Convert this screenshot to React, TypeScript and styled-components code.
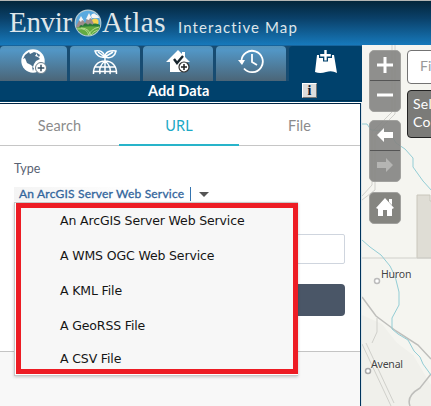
import React from "react";
import styled, { createGlobalStyle } from "styled-components";

const Global = createGlobalStyle`
  * { box-sizing: border-box; }
  body { margin: 0; overflow: hidden; font-family: Lato, "Open Sans", sans-serif; }
`;

const Page = styled.div`
  width: 431px;
  height: 406px;
  display: flex;
  flex-direction: column;
  overflow: hidden;
  background: #f5f5f0;
`;

const Header = styled.header`
  height: 45px;
  flex: none;
  display: flex;
  align-items: flex-start;
  padding-left: 9px;
  border-top: 1px solid #b4b6b4;
  background: linear-gradient(#03263b 0%, #0a416a 40%, #1779bb 100%);
  color: #dfe6ea;
`;

const Brand = styled.div`
  display: flex;
  width: 158px;
  height: 44px;
  font: 29px/43px "Liberation Serif", serif;
`;

const BrandWord = styled.span<{ $width: number; $spacing: number }>`
  width: ${(p) => p.$width}px;
  letter-spacing: ${(p) => p.$spacing}px;
  white-space: nowrap;
`;

const Emblem = styled.svg`
  width: 28px;
  height: 28px;
  margin-top: 8px;
  flex: none;
`;

const Subtitle = styled.span`
  margin: 15px 0 0 11px;
  font-size: 15px;
  line-height: 22px;
  letter-spacing: 1.1px;
  white-space: nowrap;
`;

const Body = styled.div`
  flex: 1;
  display: flex;
  min-height: 0;
`;

const Sidebar = styled.aside`
  width: 362px;
  flex: none;
  display: flex;
  flex-direction: column;
  background: #00416c;
`;

const ToolTabs = styled.nav`
  display: flex;
  height: 36px;
  flex: none;
  background: #174c72;
  border-top: 1px solid #17649c;
`;

const ToolTab = styled.div<{ $first?: boolean; $active?: boolean }>`
  width: ${(p) => (p.$first ? 67 : p.$active ? 74 : 70)}px;
  margin-right: ${(p) => (p.$active ? 0 : 3)}px;
  flex: none;
  display: flex;
  justify-content: center;
  border-radius: 4px 4px 0 0;
  background: ${(p) => (p.$active ? "#00416c" : "linear-gradient(#5693b8 0%, #5296c5 12%, #4b6577 100%)")};
  svg { display: block; margin-top: 3px; }
`;

const TitleBar = styled.div`
  height: 20px;
  flex: none;
  display: flex;
  align-items: center;
  color: #fff;
  padding-left: 148px;
  border-bottom: 1px solid #00304f;
`;

const TitleText = styled.h1`
  margin: 0;
  width: 154px;
  font-size: 14.5px;
  line-height: 20px;
  letter-spacing: 0.1px;
`;

const InfoButton = styled.span`
  width: 15px;
  height: 15px;
  background: #ddd;
  border: 1px solid #777;
  border-top-color: #fff;
  border-left-color: #fff;
  color: #102238;
  text-align: center;
  font: bold 14px/13px "Liberation Serif", serif;
`;

const Panel = styled.main`
  flex: 1;
  min-height: 0;
  margin-top: 1px;
  border-top: 1px solid #fff;
  border-right: 1px solid #dce4e8;
  background: #f8f8f8;
`;

const PanelInner = styled.div`
  height: 303px;
  border-top: 1px solid #002443;
  border-right: 1px solid #00345c;
`;

const Form = styled.section`
  position: relative;
  height: 248px;
  background: #fff;
  border-bottom: 1px solid #c4c4c4;
`;

const SourceTabs = styled.div`
  display: grid;
  grid-template-columns: 119px 120px 1fr;
  height: 42px;
`;

const SourceTab = styled.div<{ $active?: boolean }>`
  display: flex;
  justify-content: center;
  padding-top: 12px;
  font-size: 14.5px;
  line-height: 20px;
  letter-spacing: 0.1px;
  color: ${(p) => (p.$active ? "#1ca9c5" : "#8b8b8b")};
  border-bottom: ${(p) => (p.$active ? "2px solid #28b4ca" : "1px solid #c6c6c6")};
`;

const Label = styled.div`
  padding: 13px 0 0 14px;
  font-size: 12.5px;
  line-height: 20px;
  color: #596273;
`;

const Select = styled.div`
  display: flex;
  align-items: center;
  margin: 7px 0 0 14px;
  height: 16px;
`;

const SelectValue = styled.span`
  width: 177px;
  height: 14px;
  padding-left: 5px;
  border-right: 1px solid #3474b0;
  background: linear-gradient(90deg, #f4f4f4, #fff 70%);
  color: #32659c;
  font-size: 12px;
  -webkit-text-stroke: 0.3px #32659c;
  line-height: 14px;
  letter-spacing: 0.2px;
  white-space: nowrap;
`;

const Caret = styled.span`
  margin-left: 8px;
  border: 5px solid transparent;
  border-top-color: #555;
  border-bottom: 0;
`;

const UrlField = styled.div`
  margin: 32px 15px 0 14px;
  height: 30px;
  border: 1px solid #cfd5de;
  border-radius: 2px;
`;

const AddButton = styled.div`
  margin: 20px 15px 0 14px;
  height: 32px;
  border-radius: 4px;
  background: #4a5667;
`;

const Menu = styled.ul`
  position: absolute;
  left: 14px;
  top: 98px;
  width: 284px;
  height: 174px;
  margin: 0;
  padding: 0 0 0 1px;
  list-style: none;
  border: 1px solid #c8c8c8;
  border-right: 0;
  background: #fff;
  box-shadow: 0 1px 3px #0003;
`;

const Choices = styled.div`
  height: 171px;
  padding: 1px 0 0 39px;
  border: 5px solid #ed1c24;
  background: #f7f7f7;
`;

const Choice = styled.li<{ $last?: boolean }>`
  height: ${(p) => (p.$last ? 31 : 35)}px;
  padding-top: ${(p) => (p.$last ? 0 : 2)}px;
  color: #151515;
  font: 12.5px/20px "DejaVu Sans", sans-serif;
  letter-spacing: -0.14px;
  white-space: nowrap;
`;

const MapArea = styled.section`
  position: relative;
  flex: 1;
  overflow: hidden;
  background: #f5f5f0;
`;

const MapCanvas = styled.svg`
  display: block;
  width: 69px;
  height: 361px;
`;

const Place = styled.span<{ $x: number; $y: number }>`
  position: absolute;
  left: ${(p) => p.$x}px;
  top: ${(p) => p.$y}px;
  font: 10.5px/14px "Noto Sans", sans-serif;
  letter-spacing: -0.2px;
  color: #444;
  text-shadow: 0 0 2px #fff;
`;

const Controls = styled.div`
  position: absolute;
  left: 7px;
  top: 5px;
  width: 32px;
  display: flex;
  flex-direction: column;
`;

const ControlGroup = styled.div<{ $gap?: number; $home?: boolean }>`
  height: ${(p) => (p.$home ? 32 : 62)}px;
  margin-top: ${(p) => p.$gap ?? 0}px;
  border-radius: 5px;
  background: ${(p) => (p.$home ? "#858580" : "#858583e8")};
  border: 1px solid #a1a19e;
  display: flex;
  flex-direction: column;
`;

const Control = styled.div<{ $divided?: boolean }>`
  height: 30px;
  display: flex;
  align-items: center;
  justify-content: center;
  padding-bottom: 2px;
  border-bottom: ${(p) => (p.$divided ? "1px solid #555" : "0")};
`;

const SearchBox = styled.div`
  position: absolute;
  left: 45px;
  top: 5px;
  width: 60px;
  height: 34px;
  border: 1px solid #737373;
  border-radius: 4px;
  background: #fff;
  padding-left: 12px;
  color: #999;
  font: 14px/30px Lato, sans-serif;
`;

const LayerBox = styled.div`
  position: absolute;
  left: 45px;
  top: 45px;
  width: 60px;
  height: 48px;
  border: 1px solid #222;
  border-radius: 4px;
  background: #7b7b78;
  color: #fff;
  padding: 4px 0 0 5px;
  font: 14px/18px Lato, sans-serif;
  letter-spacing: 0.3px;
`;

const AtlasEmblem = () => (
  <Emblem viewBox="0 0 28 28">
    <defs>
      <clipPath id="disc"><circle cx="14" cy="14" r="12.3" /></clipPath>
    </defs>
    <circle cx="14" cy="14" r="13.4" fill="#b8cbd0" />
    <g clipPath="url(#disc)">
      <path fill="#59a9df" d="M0 0h28v28H0z" />
      <circle cx="21" cy="13" r="3.5" fill="#f6d54c" />
      <path fill="#9b8d8c" d="m1 19 6-11 4 6 4-9 7 14z" />
      <path fill="#f4f5f5" d="m5 11 2-4 3 5-2-1-1 2zm7-1 3-6 3 6-2-1-1 2zM17 7c1-3 4-3 5-1 3 0 4 2 3 3h-7z" />
      <path fill="#287b3b" d="M5 19c1-4 3-3 4-2 1-4 4-3 5-1 2-3 4-1 4 0 3-3 6-1 8 0v6H4z" />
      <path fill="#63aa42" d="M0 19q14-3 28-1v10H0z" />
      <path fill="none" stroke="#c7e8a0" strokeWidth=".8" d="M3 20q11-2 12 8M7 19q9 0 10 9M25 18q-9 2-11 10M26 21q-7 0-10 7" />
    </g>
  </Emblem>
);

const GlobeAdd = () => (
  <svg width="26" height="27" viewBox="0 0 26 27">
    <circle cx="12" cy="12" r="11.7" fill="#fff" />
    <path fill="#486f8c" d="m4 6 4-3 1 2 4-2 3 1-2 3 3 1 2 2-4 2-2 3-1 3-2-2-4-2-2-5-2 1zM16 4l3 2-1 2-2-2zm-5 14 2 1-1 3z" />
    <circle cx="20" cy="19" r="5.5" fill="#fff" stroke="#657986" />
    <path stroke="#344e61" strokeWidth="1.5" d="M20 15.7v6.6M16.7 19h6.6" />
  </svg>
);

const GlobePlant = () => (
  <svg width="26" height="27" viewBox="0 0 26 27" fill="none" stroke="#fff" strokeWidth="1.5">
    <path d="M1.5 25C1 17 6 12 13 12s12 5 11.5 13M13 8v17M8 25c-1-5 1-10 5-13 4 3 6 8 5 13M3 18h20M1 22.5h24" />
    <path d="M13 8C8 9 4 6 3 2c5-1 9 1 10 6ZM13 8c0-5 5-7 11-6-1 5-5 8-11 6ZM6 3l7 5 8-5" />
  </svg>
);

const HouseCheck = () => (
  <svg width="26" height="27" viewBox="0 0 26 27">
    <path fill="#fff" d="M13 1 1 13h4v10h17V13h3l-5-5V3h-3v2z" />
    <path fill="none" stroke="#17242d" strokeWidth="2.4" d="m9 10 3 4 6-7" />
    <circle cx="19" cy="18" r="5" fill="#fff" stroke="#333" strokeWidth="1.2" />
    <path stroke="#222" strokeWidth="1.5" d="M19 15v6m-3-3h6" />
  </svg>
);

const History = () => (
  <svg width="26" height="27" viewBox="0 0 26 27" fill="none">
    <path stroke="#fff" strokeWidth="1.8" d="M3.4 12A10.7 10.7 0 1 1 6 19.5M14 5v8l5 3" />
    <path fill="#fff" d="M0 11h7l-3 5z" />
  </svg>
);

const MapAdd = () => (
  <svg width="26" height="27" viewBox="0 0 26 27">
    <path fill="#fff" d="M4 6h17l3 18q-5-3-11-1-6 2-11 0z" />
    <path stroke="#00416c" strokeWidth="5" d="M12.5 0v12.5M6 6.5h13" />
    <path stroke="#fff" strokeWidth="2.4" d="M12.5 1v10.5M7.2 6.2h10.6" />
  </svg>
);

const choices = [
  "An ArcGIS Server Web Service",
  "A WMS OGC Web Service",
  "A KML File",
  "A GeoRSS File",
  "A CSV File",
];

const Arrow = ({ right = false }: { right?: boolean }) => (
  <svg width="18" height="16" viewBox="0 0 18 16">
    <path fill={right ? "#b5b5b3" : "#fff"} d={right ? "M17 8 10 1v4H1v6h9v4z" : "m1 8 7-7v4h9v6H8v4z"} />
  </svg>
);

export default function App() {
  return (
    <Page>
      <Global />
      <Header>
        <Brand>
          <BrandWord $width={65} $spacing={-0.3}>Envir</BrandWord>
          <AtlasEmblem />
          <BrandWord $width={64} $spacing={0.6}>Atlas</BrandWord>
        </Brand>
        <Subtitle>Interactive Map</Subtitle>
      </Header>
      <Body>
        <Sidebar>
          <ToolTabs>
            <ToolTab $first><GlobeAdd /></ToolTab>
            <ToolTab><GlobePlant /></ToolTab>
            <ToolTab><HouseCheck /></ToolTab>
            <ToolTab><History /></ToolTab>
            <ToolTab $active><MapAdd /></ToolTab>
          </ToolTabs>
          <TitleBar>
            <TitleText>Add Data</TitleText>
            <InfoButton>i</InfoButton>
          </TitleBar>
          <Panel>
            <PanelInner>
              <Form>
                <SourceTabs>
                  <SourceTab>Search</SourceTab>
                  <SourceTab $active>URL</SourceTab>
                  <SourceTab>File</SourceTab>
                </SourceTabs>
                <Label>Type</Label>
                <Select>
                  <SelectValue>An ArcGIS Server Web Service</SelectValue>
                  <Caret />
                </Select>
                <UrlField />
                <AddButton />
                <Menu>
                  <Choices>
                    {choices.map((name, i) => (
                      <Choice key={name} $last={i === choices.length - 1}>{name}</Choice>
                    ))}
                  </Choices>
                </Menu>
              </Form>
            </PanelInner>
          </Panel>
        </Sidebar>
        <MapArea>
          <MapCanvas viewBox="0 0 69 361">
            <path fill="#dfddd5" stroke="#c9c6bc" d="M55 213v-63h13v6h12v57z" />
            <path fill="#edede8" d="M0 270l20 9 15 19 16 12 18 30v21H0z" opacity=".6" />
            <g fill="none" stroke="#d0d0cb">
              <path d="M30 0v67L10 87v53L0 151M33 0v69L13 89v56L0 155M0 213h69" />
              <path strokeWidth="1.5" stroke="#bebebb" d="m0 252 14 19 20 15 22 14 13 14M48 361q-4-10 10-18l11-14" />
              <path d="m0 299 29 62M4 298l28 60M15 273v14l-5 11" />
            </g>
            <path fill="none" stroke="#93cdd5" d="M0 79h5l4 6 18 1 7 12 9 6 8 9v9l10 14 9 10M0 195l8 7 11 8 9 11 5 10 4 16v13l-7 13v11l6 5 10 6 6 11 6 6 3 7 8 11" />
            <circle cx="15" cy="236" r="2.5" fill="#fff" stroke="#bcbcbc" strokeWidth="1.5" />
            <circle cx="6" cy="326" r="2.5" fill="#fff" stroke="#aaa" strokeWidth="1.5" />
          </MapCanvas>
          <Place $x={19} $y={222}>Huron</Place>
          <Place $x={9} $y={312}>Avenal</Place>
          <Controls>
            <ControlGroup>
              <Control $divided><svg width="18" height="18"><path stroke="#fff" strokeWidth="3" d="M9 1v16M1 9h16" /></svg></Control>
              <Control><svg width="18" height="18"><path stroke="#fff" strokeWidth="3" d="M1 9h16" /></svg></Control>
            </ControlGroup>
            <ControlGroup $gap={8}>
              <Control $divided><Arrow /></Control>
              <Control><Arrow right /></Control>
            </ControlGroup>
            <ControlGroup $gap={10} $home>
              <Control>
                <svg width="20" height="20" viewBox="0 0 20 20"><path fill="#fff" d="m10 1 9 10-2 1v7h-5v-6H8v6H3v-7l-2-1zM14 2h3v6l-3-3z" /></svg>
              </Control>
            </ControlGroup>
          </Controls>
          <SearchBox>Fi</SearchBox>
          <LayerBox>Sel<br />Co</LayerBox>
        </MapArea>
      </Body>
    </Page>
  );
}
